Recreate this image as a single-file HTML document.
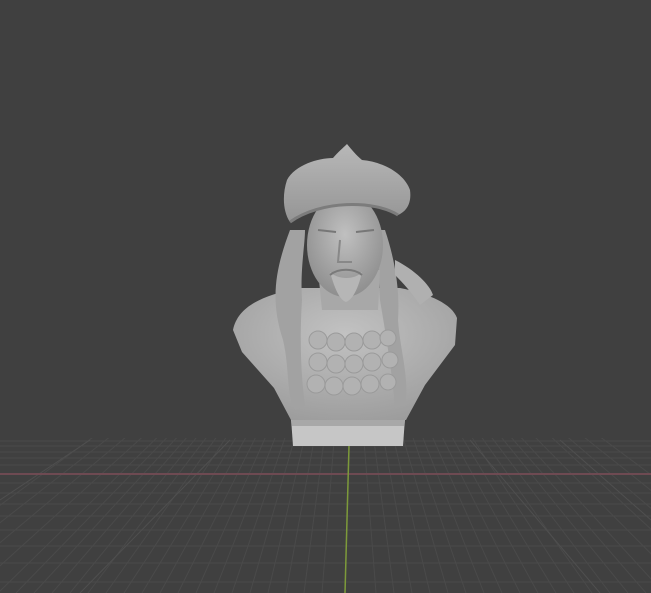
<!DOCTYPE html>
<html><head><style>
html,body{margin:0;padding:0;background:#404040;width:651px;height:593px;overflow:hidden}
</style></head><body>
<svg width="651" height="593" viewBox="0 0 651 593" xmlns="http://www.w3.org/2000/svg">
<defs>
<clipPath id="floor"><rect x="0" y="438" width="651" height="155"/></clipPath>
<radialGradient id="bodyg" cx="0.5" cy="0.35" r="0.7">
<stop offset="0" stop-color="#c2c2c2"/><stop offset="1" stop-color="#9c9c9c"/></radialGradient>
<radialGradient id="faceg" cx="0.5" cy="0.4" r="0.6">
<stop offset="0" stop-color="#c0c0c0"/><stop offset="1" stop-color="#8f8f8f"/></radialGradient>
<linearGradient id="hatg" x1="0" y1="0" x2="0" y2="1">
<stop offset="0" stop-color="#b8b8b8"/><stop offset="1" stop-color="#959595"/></linearGradient>
</defs>
<rect width="651" height="593" fill="#404040"/>
<g clip-path="url(#floor)" stroke="#4a4a4a" stroke-width="1" fill="none">
<path d="M0 441H651M0 446H651M0 452H651M0 458H651M0 465H651M0 483H651M0 493H651M0 504H651M0 516H651M0 530H651M0 546H651M0 563H651M0 582H651"/>
<path d="M349 250L-120 593M349 250L-90 593M349 250L-60 593M349 250L-30 593M349 250L-2 593M349 250L16 593M349 250L34 593M349 250L52 593M349 250L70 593M349 250L88 593M349 250L106 593M349 250L124 593M349 250L142 593M349 250L160 593M349 250L178 593M349 250L196 593M349 250L214 593M349 250L232 593M349 250L250 593M349 250L268 593M349 250L286 593M349 250L304 593M349 250L322 593M349 250L376 593M349 250L394 593M349 250L412 593M349 250L430 593M349 250L448 593M349 250L466 593M349 250L484 593M349 250L502 593M349 250L520 593M349 250L538 593M349 250L556 593M349 250L574 593M349 250L592 593M349 250L610 593M349 250L628 593M349 250L646 593M349 250L664 593M349 250L690 593M349 250L720 593M349 250L750 593M349 250L780 593M349 250L810 593"/>
<path stroke="#4f4f4f" d="M90 440L0 500M230 440L80 593M560 440L651 520M470 440L600 593"/>
</g>
<line x1="0" y1="474" x2="651" y2="474" stroke="#6e4a52" stroke-width="2"/>
<line x1="349" y1="446" x2="345" y2="593" stroke="#7d9a3a" stroke-width="1.5"/>
<!-- base -->
<path d="M291 418 L405 418 L403 446 L293 446 Z" fill="#c6c6c6"/>
<rect x="292" y="418" width="112" height="8" fill="#a8a8a8"/>
<!-- body -->
<path d="M233 330 C238 306 262 296 298 288 L400 288 C430 294 452 304 457 318 L455 345 L425 385 L406 420 L291 420 L274 388 L242 352 Z" fill="url(#bodyg)"/>
<!-- hair -->
<path d="M290 230 C275 270 270 300 283 340 C290 370 286 395 295 410 L305 405 C300 370 300 330 302 300 C300 270 305 245 305 230 Z" fill="#a2a2a2"/>
<path d="M385 230 C395 260 400 290 398 320 C400 350 410 380 405 405 L395 408 C392 370 385 330 380 300 C378 270 378 245 378 230 Z" fill="#a2a2a2"/>
<path d="M395 260 C415 270 430 285 433 295 L420 305 C410 290 400 280 395 275 Z" fill="#b0b0b0"/>
<!-- scales -->
<g fill="#b2b2b2" stroke="#9a9a9a" stroke-width="1">
<circle cx="318" cy="340" r="9"/><circle cx="336" cy="342" r="9"/><circle cx="354" cy="342" r="9"/><circle cx="372" cy="340" r="9"/><circle cx="388" cy="338" r="8"/>
<circle cx="318" cy="362" r="9"/><circle cx="336" cy="364" r="9"/><circle cx="354" cy="364" r="9"/><circle cx="372" cy="362" r="9"/><circle cx="390" cy="360" r="8"/>
<circle cx="316" cy="384" r="9"/><circle cx="334" cy="386" r="9"/><circle cx="352" cy="386" r="9"/><circle cx="370" cy="384" r="9"/><circle cx="388" cy="382" r="8"/>
</g>
<!-- neck/face -->
<path d="M318 270 L380 270 L378 310 L322 310 Z" fill="#a8a8a8"/>
<ellipse cx="345" cy="245" rx="38" ry="52" fill="url(#faceg)"/>
<path d="M330 272 C335 290 340 300 346 302 C352 300 358 290 362 272 C355 280 338 280 330 272 Z" fill="#b6b6b6"/>
<path d="M318 230 L336 232 M356 232 L374 230" stroke="#777" stroke-width="2"/>
<path d="M340 240 L338 262 L352 262" stroke="#888" stroke-width="2" fill="none"/>
<path d="M330 275 C338 268 354 268 362 275" stroke="#7a7a7a" stroke-width="2" fill="none"/>
<!-- hat -->
<path d="M347 144 C352 150 356 155 362 160 C385 162 405 175 410 190 C412 205 405 212 398 215 C375 200 320 200 290 222 C283 212 282 195 287 180 C295 165 318 158 333 158 C338 152 343 148 347 144 Z" fill="url(#hatg)"/>
<path d="M290 222 C320 200 375 200 398 215" stroke="#7c7c7c" stroke-width="3" fill="none"/>
</svg>
</body></html>
